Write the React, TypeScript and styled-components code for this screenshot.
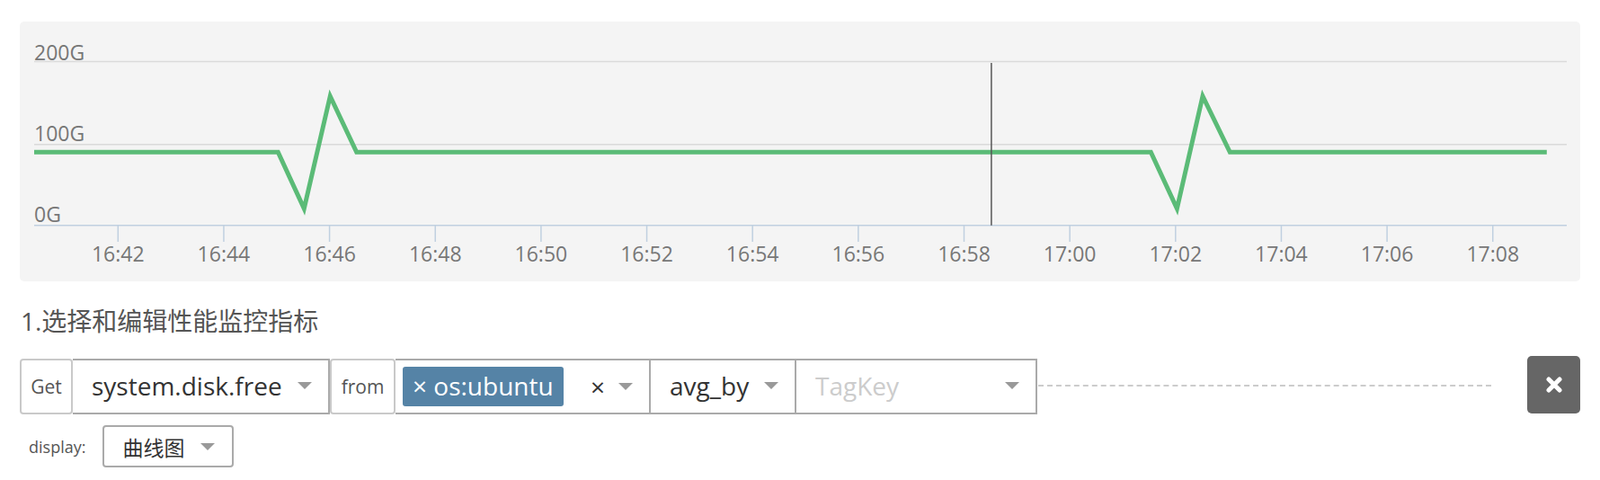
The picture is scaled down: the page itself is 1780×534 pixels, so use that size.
import React from 'react';
import styled, { createGlobalStyle } from 'styled-components';

const GlobalStyle = createGlobalStyle`
  body {
    margin: 0;
    background: #fff;
    font-family: 'Open Sans', 'Noto Sans CJK SC', sans-serif;
  }
`;

const Page = styled.div`
  padding: 24px 22px 0;
`;

const ChartPanel = styled.div`
  height: 289px;
  background: #f4f4f4;
  border-radius: 5px;
  overflow: hidden;
  svg {
    display: block;
  }
`;

const SectionTitle = styled.h3`
  margin: 25px 0 23px 1px;
  font-size: 28px;
  line-height: 38px;
  font-weight: normal;
  color: #555;
`;

const QueryRow = styled.div`
  display: flex;
  align-items: center;
  height: 62px;
`;

const Addon = styled.div<{ $width: number }>`
  display: flex;
  align-items: center;
  justify-content: center;
  width: ${(p) => p.$width}px;
  height: 62px;
  box-sizing: border-box;
  border: 2px solid #c9c9c9;
  border-radius: 4px;
  font-size: 21px;
  color: #555;
`;

const Select = styled.div<{ $width: number }>`
  display: flex;
  align-items: center;
  justify-content: space-between;
  width: ${(p) => p.$width}px;
  height: 62px;
  box-sizing: border-box;
  padding: 0 18px 2px 21px;
  border: 2px solid #aaa;
  border-left: none;
  font-size: 28px;
  color: #333;
`;

const TagSelect = styled(Select)`
  padding-left: 8px;
  padding-bottom: 0;
`;

const Placeholder = styled.span`
  color: #ccc;
`;

const Caret = styled.span`
  width: 0;
  height: 0;
  border-left: 8px solid transparent;
  border-right: 8px solid transparent;
  border-top: 8px solid #999;
`;

const Chip = styled.span`
  display: inline-flex;
  align-items: center;
  height: 44px;
  padding: 0 11px 2px;
  box-sizing: border-box;
  background: #5583a6;
  color: #fff;
  border-radius: 3px;
  font-size: 28px;
`;

const SelectTail = styled.span`
  display: flex;
  align-items: center;
`;

const ClearMark = styled.span`
  margin-right: 15px;
  color: #333;
  font-size: 28px;
  line-height: 1;
`;

const Connector = styled.div`
  flex: 1;
  height: 0;
  margin: 0 40px 3px 1px;
  border-top: 2px dashed #ccc;
`;

const RemoveButton = styled.button`
  display: flex;
  align-items: center;
  justify-content: center;
  width: 59px;
  height: 64px;
  margin-top: -4px;
  padding: 0;
  border: none;
  border-radius: 5px;
  background: #666;
`;

const DisplayRow = styled.div`
  display: flex;
  align-items: center;
  margin-top: 12px;
  padding-left: 10px;
`;

const DisplayLabel = styled.span`
  margin-right: 19px;
  font-size: 18px;
  color: #555;
`;

const DisplaySelect = styled.div`
  display: flex;
  align-items: center;
  justify-content: space-between;
  width: 146px;
  height: 47px;
  box-sizing: border-box;
  padding: 0 19px 0 20px;
  border: 2px solid #aaa;
  border-radius: 4px;
  font-size: 23px;
  color: #333;
`;

// chart geometry, in page pixels
const plotLeft = 38;
const plotRight = 1743;
const axisY = 250.7;
const yLines = [
  { label: '200G', y: 68.5 },
  { label: '100G', y: 160.7 },
];
const ticks = ['16:42', '16:44', '16:46', '16:48', '16:50', '16:52', '16:54', '16:56', '16:58', '17:00', '17:02', '17:04', '17:06', '17:08'];
const tickX = (i: number) => 131.3 + i * 117.65;

const series: [number, number][] = [
  [38, 169.3],
  [309.3, 169.3],
  [338.3, 232],
  [367.3, 107],
  [396.7, 169.3],
  [1280.3, 169.3],
  [1309.4, 232],
  [1338, 107],
  [1368.3, 169.3],
  [1720.8, 169.3],
];

const DiskChart = () => (
  <svg width="1736" height="289" viewBox="22 24 1736 289">
    {yLines.map((l) => (
      <line key={l.label} x1={plotLeft} x2={plotRight} y1={l.y} y2={l.y} stroke="#dadada" strokeWidth={1.5} />
    ))}
    <line x1={plotLeft} x2={plotRight} y1={axisY} y2={axisY} stroke="#c0d0e0" strokeWidth={1.5} />
    {ticks.map((t, i) => (
      <line key={t} x1={tickX(i)} x2={tickX(i)} y1={axisY} y2={269} stroke="#c0d0e0" strokeWidth={1.5} />
    ))}
    <g fontFamily="'Open Sans', sans-serif" fontSize={23} fill="#777">
      <text x={plotLeft} y={67}>200G</text>
      <text x={plotLeft} y={157}>100G</text>
      <text x={plotLeft} y={247}>0G</text>
      {ticks.map((t, i) => (
        <text key={t} x={tickX(i)} y={291} textAnchor="middle">
          {t}
        </text>
      ))}
    </g>
    <polyline
      points={series.map((p) => p.join(',')).join(' ')}
      fill="none"
      stroke="#5bbb77"
      strokeWidth={5}
      strokeLinejoin="miter"
    />
    <line x1={1102.9} x2={1102.9} y1={70} y2={axisY} stroke="#555" strokeWidth={1.5} />
  </svg>
);

const App = () => (
  <>
    <GlobalStyle />
    <Page>
      <ChartPanel>
        <DiskChart />
      </ChartPanel>
      <SectionTitle>1.选择和编辑性能监控指标</SectionTitle>
      <QueryRow>
        <Addon $width={59}>Get</Addon>
        <Select $width={286}>
          system.disk.free
          <Caret />
        </Select>
        <Addon $width={73}>from</Addon>
        <TagSelect $width={284}>
          <Chip>× os:ubuntu</Chip>
          <SelectTail>
            <ClearMark>×</ClearMark>
            <Caret />
          </SelectTail>
        </TagSelect>
        <Select $width={162}>
          avg_by
          <Caret />
        </Select>
        <Select $width={268}>
          <Placeholder>TagKey</Placeholder>
          <Caret />
        </Select>
        <Connector />
        <RemoveButton>
          <svg width="18" height="18" viewBox="0 0 18 18">
            <path d="M3 3 L15 15 M15 3 L3 15" stroke="#fff" strokeWidth={5} strokeLinecap="round" />
          </svg>
        </RemoveButton>
      </QueryRow>
      <DisplayRow>
        <DisplayLabel>display:</DisplayLabel>
        <DisplaySelect>
          曲线图
          <Caret />
        </DisplaySelect>
      </DisplayRow>
    </Page>
  </>
);

export default App;
